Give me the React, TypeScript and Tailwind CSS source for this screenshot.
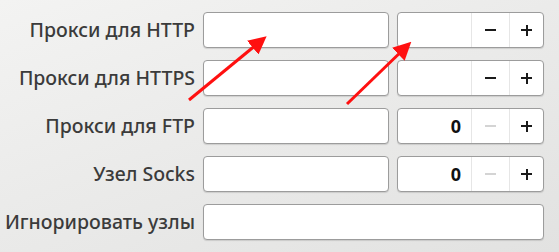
import React from 'react';

type Row = { label: string; port?: string; minusDisabled?: boolean };

const ROWS: Row[] = [
  { label: 'Прокси для HTTP', port: '' },
  { label: 'Прокси для HTTPS', port: '' },
  { label: 'Прокси для FTP', port: '0', minusDisabled: true },
  { label: 'Узел Socks', port: '0', minusDisabled: true },
];

const SpinBox: React.FC<{ value: string; minusDisabled?: boolean }> = ({ value, minusDisabled }) => (
  <div className="flex h-[36px] w-[147px] bg-white border border-[#9c9c9c] rounded-[4px] shadow-[0_1px_1px_rgba(0,0,0,0.12)] overflow-hidden">
    <div className="w-[73px] flex items-center justify-end pr-[10px] font-bold text-[18px] text-[#111]">{value}</div>
    <div className="w-[38px] border-l border-[#e6e6e6] flex items-center justify-center">
      <span className={`block w-[11px] h-[2px] ${minusDisabled ? 'bg-[#d4d4d4]' : 'bg-[#1a1a1a]'}`} />
    </div>
    <div className="flex-1 border-l border-[#e6e6e6] flex items-center justify-center relative">
      <span className="block w-[11px] h-[2px] bg-[#1a1a1a]" />
      <span className="absolute block w-[2px] h-[11px] bg-[#1a1a1a]" />
    </div>
  </div>
);

const TextBox: React.FC<{ className?: string }> = ({ className = 'w-[186px]' }) => (
  <div className={`h-[36px] bg-white border border-[#9c9c9c] rounded-[4px] shadow-[0_1px_1px_rgba(0,0,0,0.12)] ${className}`} />
);

const App: React.FC = () => {
  return (
    <div
      className="relative w-[559px] h-[252px] overflow-hidden bg-[linear-gradient(160deg,#f3f3f2_0%,#ebebea_45%,#e2e2e1_100%)]"
      style={{ fontFamily: '"Noto Sans", "Open Sans", sans-serif' }}
    >
      <div className="pt-[12px] flex flex-col gap-[12px]">
        {ROWS.map(row => (
          <div key={row.label} className="flex items-center h-[36px]">
            <div className="w-[195px] whitespace-nowrap text-right text-[19.5px] font-medium text-[#3b3b3b]">{row.label}</div>
            <div className="ml-[8px] flex gap-[8px]">
              <TextBox />
              <SpinBox value={row.port ?? ''} minusDisabled={row.minusDisabled} />
            </div>
          </div>
        ))}
        <div className="flex items-center h-[36px]">
          <div className="w-[195px] whitespace-nowrap text-right text-[19.5px] font-medium text-[#3b3b3b]">Игнорировать узлы</div>
          <div className="ml-[8px]">
            <TextBox className="w-[341px]" />
          </div>
        </div>
      </div>

      {/* red annotation arrows */}
      <svg className="absolute left-0 top-0" width="559" height="252" viewBox="0 0 559 252">
        <defs>
          <marker id="ah" markerWidth="6" markerHeight="6" refX="4" refY="3" orient="auto" markerUnits="strokeWidth">
            <path d="M0,0 L6,3 L0,6 Z" fill="#ff1010" />
          </marker>
        </defs>
        <line x1="189" y1="100" x2="262" y2="40" stroke="#ff1010" strokeWidth="3" markerEnd="url(#ah)" />
        <line x1="347" y1="104" x2="407" y2="46" stroke="#ff1010" strokeWidth="3" markerEnd="url(#ah)" />
      </svg>
    </div>
  );
};

export default App;
